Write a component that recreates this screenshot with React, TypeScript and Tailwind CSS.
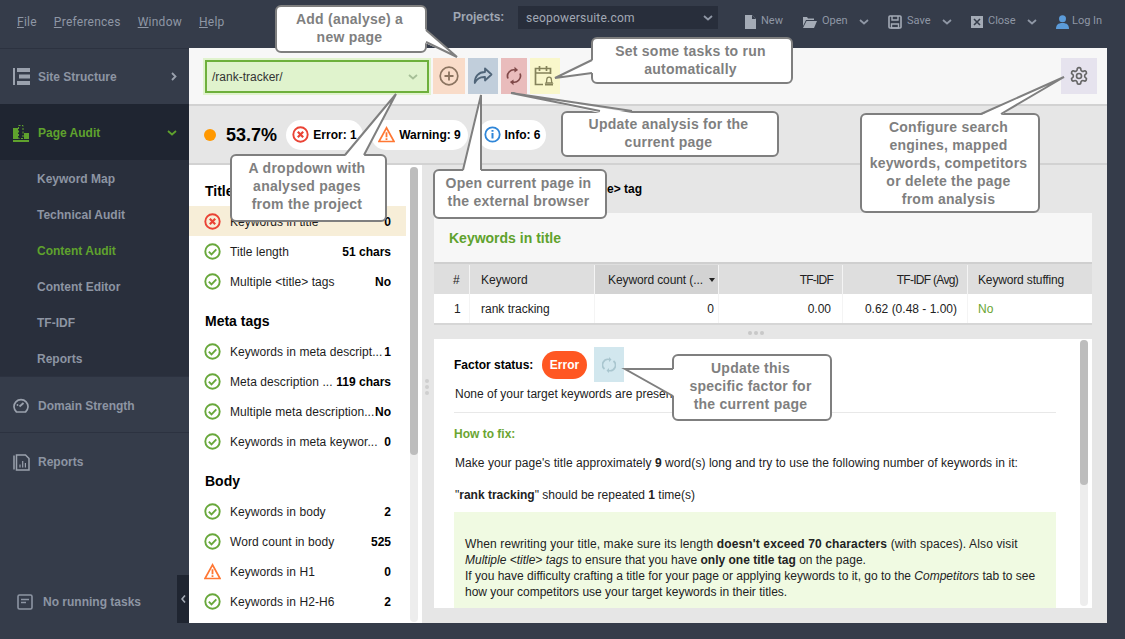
import React from "react";

const Check = () => (
  <svg width="17" height="17" viewBox="0 0 17 17" className="shrink-0" fill="none">
    <circle cx="8.500" cy="8.500" r="7.200" stroke="#69a83c" strokeWidth="1.900" />
    <path d="M4.800 8.600l2.700 2.700 4.800-5" stroke="#69a83c" strokeWidth="1.900" />
  </svg>
);
const ErrIcon = ({ s = 17 }: { s?: number }) => (
  <svg width={s} height={s} viewBox="0 0 17 17" className="shrink-0" fill="none">
    <circle cx="8.500" cy="8.500" r="7.200" stroke="#ea4335" strokeWidth="1.900" />
    <path d="M5.800 5.800l5.400 5.400M11.200 5.800l-5.400 5.400" stroke="#ea4335" strokeWidth="2.200" />
  </svg>
);
const Warn = ({ s = 17 }: { s?: number }) => (
  <svg width={s} height={s} viewBox="0 0 17 17" className="shrink-0" fill="none">
    <path d="M8.500 1.800L1 15.500h15z" stroke="#ff7733" strokeWidth="1.700" strokeLinejoin="miter" />
    <path d="M8.500 6.200v5M8.500 12.200v1.800" stroke="#ff7733" strokeWidth="1.800" />
  </svg>
);
const InfoIcon = () => (
  <svg width="17" height="17" viewBox="0 0 17 17" className="shrink-0" fill="none">
    <circle cx="8.500" cy="8.500" r="7.200" stroke="#2f86d8" strokeWidth="1.800" />
    <path d="M8.500 7v5.500M8.500 4v1.800" stroke="#2f86d8" strokeWidth="2" />
  </svg>
);
const Chev = ({ c = "#8f97a5", w = 10 }: { c?: string; w?: number }) => (
  <svg width={w} height="6" viewBox="0 0 10 6" fill="none" className="shrink-0">
    <path d="M1 1l4 3.500L9 1" stroke={c} strokeWidth="1.800" />
  </svg>
);

const MenuItem = ({ first, rest }: { first: string; rest: string }) => (
  <span>
    <span className="underline">{first}</span>
    {rest}
  </span>
);

const TopAction = ({ icon, label, chev, cls, gap = "ml-[5px]" }: { icon: React.ReactNode; label: string; chev?: boolean; cls: string; gap?: string }) => (
  <div className={`flex items-center ${cls}`}>
    {icon}
    <span className={gap}>{label}</span>
    {chev && <span className="ml-[11px]"><Chev /></span>}
  </div>
);

const SideMain = ({ icon, label, active, right, cls }: { icon: React.ReactNode; label: string; active?: boolean; right?: React.ReactNode; cls: string }) => (
  <div className={`flex items-center pl-[13px] pr-[12px] font-bold text-[12px] ${active ? "text-[#5fa22d]" : "text-[#8d95a3]"} ${cls}`}>
    <span className="w-[25px] shrink-0">{icon}</span>
    <span className="flex-1">{label}</span>
    {right}
  </div>
);

const Row = ({ status, label, value, hi }: { status: "ok" | "err" | "warn"; label: string; value: string; hi?: boolean }) => (
  <div className={`h-[30px] flex items-center pl-[15px] pr-[15px] text-[12px] text-[#1c1c1c] ${hi ? "bg-[#f7eed8]" : ""}`}>
    {status === "ok" ? <Check /> : status === "err" ? <ErrIcon /> : <Warn />}
    <span className="ml-[9px] pt-[2px] flex-1 whitespace-nowrap tracking-[0.06px]">{label}</span>
    <span className="pt-[2px] font-bold text-black whitespace-nowrap">{value}</span>
  </div>
);

const SecHead = ({ t, cls }: { t: string; cls?: string }) => (
  <div className={`h-[30px] flex items-center pl-[16px] text-[14px] font-bold text-black ${cls ?? ""}`}>{t}</div>
);

const Pill = ({ icon, text, cls }: { icon: React.ReactNode; text: string; cls: string }) => (
  <div className={`h-[30px] rounded-[15px] bg-white flex items-center justify-center gap-[4px] text-[12px] font-bold text-black ${cls}`}>
    {icon}
    <span className="pt-[1px]">{text}</span>
  </div>
);

const ToolBtn = ({ cls, children }: { cls: string; children: React.ReactNode }) => (
  <div className={`h-[36px] flex items-center justify-center shrink-0 ${cls}`}>{children}</div>
);

const Th = ({ cls, children }: { cls: string; children: React.ReactNode }) => (
  <div className={`h-full flex items-center border-r border-[#f4f4f4] ${cls}`}>{children}</div>
);

const Callout = ({ cls, lines }: { cls: string; lines: string[] }) => (
  <div className={`absolute bg-white border-2 border-[#7f7f7f] rounded-[6px] flex flex-col items-center justify-center pr-[3px] text-[14px] leading-[18px] tracking-[0.25px] font-bold text-[#7f7f7f] ${cls}`}>
    {lines.map((l) => (
      <div key={l} className="whitespace-nowrap">{l}</div>
    ))}
  </div>
);

const tails: { fill: string; line: string }[] = [
  { fill: "425,29 457,57 425,43", line: "426,30 457,57 426,42" },
  { fill: "593,60 555,78 593,73", line: "592,60 555,78 592,73" },
  { fill: "600,113 511,93 632,113", line: "600,111 511,93 632,111" },
  { fill: "345,156 396,94 364,156", line: "345,155 396,94 364,155" },
  { fill: "463,171 481,95 481,171", line: "463,170 481,95 481,170" },
  { fill: "981,115 1064,77 1001,115", line: "981,114 1064,77 1001,114" },
  { fill: "674,369 625,369 674,396", line: "673,369 625,369 673,396" },
];

export default function App() {
  return (
    <div className="relative w-[1125px] h-[639px] overflow-hidden bg-[#353c4a] flex flex-col font-['Liberation_Sans',Arial,sans-serif]">
      {/* Top bar */}
      <header className="h-[48px] shrink-0 flex text-[12px] text-[#8f97a5] font-['Roboto',sans-serif]">
        <nav className="flex gap-[17px] pl-[17px] pt-[15px] w-[453px] shrink-0 leading-[14px] tracking-[0.25px]">
          <MenuItem first="F" rest="ile" />
          <MenuItem first="P" rest="references" />
          <MenuItem first="W" rest="indow" />
          <MenuItem first="H" rest="elp" />
        </nav>
        <div className="w-[65px] shrink-0 pt-[10px] leading-[14px] font-bold text-[#a0a7b3] font-['Liberation_Sans',sans-serif]">Projects:</div>
        <div className="h-[23px] w-[200px] mt-[6px] shrink-0 bg-[#282e3b] flex items-center justify-between pl-[8px] pr-[5px] tracking-[0.2px] text-[#a2a9b5]">
          <span>seopowersuite.com</span>
          <Chev />
        </div>
        <div className="flex items-center h-[43px] text-[11px] pl-[27px]">
          <TopAction
            cls="w-[58px]"
            label="New"
            icon={
              <svg width="11" height="14" viewBox="0 0 11 14"><path d="M0 0h7l4 4v10H0z" fill="#a4abb6" /><path d="M7 0l4 4H7z" fill="#353c4a" /></svg>
            }
          />
          <TopAction
            cls="w-[85px]"
            label="Open"
            chev
            icon={
              <svg width="14" height="12" viewBox="0 0 14 12"><path d="M0 1h4l1 1.500h6V4H3L0 10z" fill="#a4abb6" /><path d="M3.500 5H14l-3 7H0z" fill="#a4abb6" /></svg>
            }
          />
          <TopAction
            cls="w-[83px]"
            label="Save"
            chev
            icon={
              <svg width="14" height="14" viewBox="0 0 14 14" fill="none"><rect x="1" y="1" width="12" height="12" rx="1" stroke="#a4abb6" strokeWidth="1.600" /><path d="M4 1v4h6V1M3.500 9h7v4h-7z" stroke="#a4abb6" strokeWidth="1.400" /></svg>
            }
          />
          <TopAction
            cls="w-[85px]"
            label="Close"
            chev
            icon={
              <svg width="12" height="12" viewBox="0 0 12 12"><rect width="12" height="12" fill="#a4abb6" /><path d="M3 3l6 6M9 3l-6 6" stroke="#353c4a" strokeWidth="1.600" /></svg>
            }
          />
          <TopAction
            cls=""
            gap="ml-[3px]"
            label="Log In"
            icon={
              <svg width="13" height="14" viewBox="0 0 13 14"><circle cx="6.500" cy="3.700" r="3.500" fill="#5b9bd9" /><path d="M0 14c0-4 2-6 6.500-6S13 10 13 14z" fill="#5b9bd9" /></svg>
            }
          />
        </div>
      </header>

      <div className="flex flex-1 min-h-0">
        {/* Sidebar */}
        <aside className="relative w-[189px] shrink-0 flex flex-col">
          <SideMain
            cls="h-[56px] border-t border-[#2c3240]"
            label="Site Structure"
            icon={
              <svg width="17" height="17" viewBox="0 0 17 17" fill="#9aa1ad"><rect x="0" y="0" width="2" height="17" /><rect x="4" y="0" width="13" height="4" /><rect x="6" y="6.500" width="11" height="4" /><rect x="4" y="13" width="13" height="4" /></svg>
            }
            right={
              <svg width="6" height="9" viewBox="0 0 6 9" fill="none"><path d="M1 1l3.500 3.500L1 8" stroke="#9aa1ad" strokeWidth="1.800" /></svg>
            }
          />
          <SideMain
            cls="h-[56px] pt-[2px] bg-[#1f2531]"
            active
            label="Page Audit"
            icon={
              <svg width="17" height="17" viewBox="0 0 17 17" fill="#5fa22d"><rect x="0" y="3" width="5" height="11" /><rect x="11" y="8" width="5" height="6" /><rect x="0" y="15" width="16" height="2" /><rect x="5.500" y="0.500" width="4.500" height="13" fill="none" stroke="#5fa22d" strokeDasharray="2 1.500" /></svg>
            }
            right={<Chev c="#5fa22d" />}
          />
          <div className="bg-[#292f3c] flex flex-col pl-[37px] text-[12px] font-bold text-[#8d95a3] h-[217px] border-b border-[#2c3240]">
            <div className="h-[36px] pt-[2px] flex items-center">Keyword Map</div>
            <div className="h-[36px] pt-[2px] flex items-center">Technical Audit</div>
            <div className="h-[36px] pt-[2px] flex items-center text-[#5fa22d]">Content Audit</div>
            <div className="h-[36px] pt-[2px] flex items-center">Content Editor</div>
            <div className="h-[36px] pt-[2px] flex items-center">TF-IDF</div>
            <div className="h-[36px] pt-[2px] flex items-center">Reports</div>
          </div>
          <SideMain
            cls="h-[56px] pt-[2px] border-b border-[#2c3240]"
            label="Domain Strength"
            icon={
              <svg width="16" height="16" viewBox="0 0 16 16" fill="none"><path d="M3.500 14A7 7 0 1 1 12.500 14z" stroke="#9aa1ad" strokeWidth="1.700" strokeLinejoin="round" /><path d="M6.500 8.500L10.500 5" stroke="#9aa1ad" strokeWidth="1.800" /><circle cx="4.500" cy="7" r="0.900" fill="#9aa1ad" /></svg>
            }
          />
          <SideMain
            cls="h-[56px] pt-[2px]"
            label="Reports"
            icon={
              <svg width="17" height="17" viewBox="0 0 17 17" fill="none"><path d="M1 1.500v14" stroke="#9aa1ad" strokeWidth="1.500" /><path d="M3.500 1h9l3.500 3.500V16H3.500z" stroke="#9aa1ad" strokeWidth="1.500" /><path d="M7 13.500v-3M9.700 13.500V7M12.400 13.500V9" stroke="#9aa1ad" strokeWidth="1.200" /></svg>
            }
          />
          <div className="mt-auto mb-[28px] flex items-center pl-[17px] text-[12px] font-bold text-[#8d95a3]">
            <svg width="16" height="16" viewBox="0 0 16 16" fill="none" className="mr-[10px]"><rect x="1" y="1" width="14" height="14" rx="1.500" stroke="#8d95a3" strokeWidth="1.600" /><path d="M4 5.500h8M4 8.500h5" stroke="#8d95a3" strokeWidth="1.600" /></svg>
            No running tasks
          </div>
          <div className="absolute right-0 bottom-[16px] w-[12px] h-[48px] bg-[#1f2531] flex items-center justify-center">
            <svg width="5" height="8" viewBox="0 0 5 8" fill="none"><path d="M4 .5L1 4l3 3.500" stroke="#a4abb6" strokeWidth="1.600" /></svg>
          </div>
        </aside>

        {/* Main */}
        <main className="w-[918px] h-[575px] shrink-0 bg-[#e6e6e6] flex flex-col">
          <div className="h-[58px] shrink-0 bg-[#f7f7f7] border-b-2 border-[#d2d2d2] flex pt-[10px] pl-[14px] pr-[10px]">
            <div className="w-[228px] h-[37px] bg-[#e0f3cd] p-[2px] shrink-0">
              <div className="w-full h-full border-2 border-[#6eb03c] flex items-center justify-between pl-[5px] pr-[9px] text-[12px] text-[#333]">
                <span>/rank-tracker/</span>
                <Chev c="#a6bf97" />
              </div>
            </div>
            <ToolBtn cls="w-[32px] ml-[2px] bg-[#f9dcc9]">
              <svg width="20" height="20" viewBox="0 0 20 20" fill="none"><circle cx="10" cy="10" r="8.800" stroke="#8b7460" strokeWidth="1.700" /><path d="M10 5.500v9M5.500 10h9" stroke="#8b7460" strokeWidth="1.800" /></svg>
            </ToolBtn>
            <ToolBtn cls="w-[30px] ml-[3px] bg-[#c1cedb]">
              <svg width="20" height="18" viewBox="0 0 20 18" fill="none"><path d="M12 1.500l6.500 6-6.500 6V10C7 9.800 3.800 11.500 1.800 16 1.500 9.500 5.500 5 12 5z" stroke="#4f6478" strokeWidth="1.800" strokeLinejoin="round" /></svg>
            </ToolBtn>
            <ToolBtn cls="w-[26px] ml-[3px] bg-[#e9bcbc]">
              <svg width="16" height="20" viewBox="0 0 16 20" fill="none"><path d="M2 12.500A6.300 6.300 0 0 1 10 4.200M14 7.500A6.300 6.300 0 0 1 6 15.800" stroke="#7f4848" strokeWidth="1.700" /><path d="M8.500 0.800l3.600 3.200-3.600 2.600zM7.500 13.400l-3.600 2.600 3.600 3.200z" fill="#7f4848" /></svg>
            </ToolBtn>
            <ToolBtn cls="w-[30px] ml-[3px] bg-[#f9f7cb]">
              <svg width="22" height="22" viewBox="0 0 22 22" fill="none"><path d="M9 19.500H1.500V3.500h15V9M1.500 8h15M5.500 1v5M12.500 1v5" stroke="#85835a" strokeWidth="1.700" /><path d="M12 18c.8-1 .8-2 .8-3.500a2.300 2.300 0 0 1 4.600 0c0 1.500 0 2.500.8 3.500z" stroke="#85835a" strokeWidth="1.300" /><rect x="11" y="19" width="8" height="1.500" fill="#85835a" /></svg>
            </ToolBtn>
            <ToolBtn cls="w-[36px] ml-auto bg-[#e6e3ee]">
              <svg width="20" height="20" viewBox="0 0 24 24" fill="none" stroke="#666" strokeWidth="2"><circle cx="12" cy="12" r="3" /><path d="M12.200 2h-.4a2 2 0 0 0-2 2v.2a2 2 0 0 1-1 1.700l-.4.300a2 2 0 0 1-2 0l-.2-.1a2 2 0 0 0-2.700.700l-.2.400a2 2 0 0 0 .7 2.700l.2.100a2 2 0 0 1 1 1.700v.5a2 2 0 0 1-1 1.700l-.2.100a2 2 0 0 0-.7 2.700l.2.400a2 2 0 0 0 2.700.7l.2-.1a2 2 0 0 1 2 0l.4.300a2 2 0 0 1 1 1.700v.2a2 2 0 0 0 2 2h.4a2 2 0 0 0 2-2v-.2a2 2 0 0 1 1-1.700l.4-.3a2 2 0 0 1 2 0l.2.100a2 2 0 0 0 2.700-.7l.2-.4a2 2 0 0 0-.7-2.700l-.2-.1a2 2 0 0 1-1-1.700v-.5a2 2 0 0 1 1-1.700l.2-.1a2 2 0 0 0 .7-2.700l-.2-.4a2 2 0 0 0-2.700-.7l-.2.100a2 2 0 0 1-2 0l-.4-.3a2 2 0 0 1-1-1.700V4a2 2 0 0 0-2-2z" /></svg>
            </ToolBtn>
          </div>

          <div className="h-[59px] shrink-0 border-b-2 border-[#d2d2d2] flex items-center pl-[15px]">
            <span className="w-[12px] h-[12px] rounded-full bg-[#ff9800] shrink-0" />
            <span className="ml-[10px] w-[60px] pt-[2px] text-[18px] font-bold text-black">53.7%</span>
            <Pill cls="w-[77px]" icon={<ErrIcon />} text="Error: 1" />
            <Pill cls="w-[97px] ml-[8px]" icon={<Warn />} text="Warning: 9" />
            <Pill cls="w-[68px] ml-[10px]" icon={<InfoIcon />} text="Info: 6" />
          </div>

          <div className="flex flex-1 min-h-0">
            {/* Factors list */}
            <div className="w-[233px] shrink-0 bg-white flex overflow-hidden">
              <div className="w-[217px] shrink-0 pt-[11px]">
                <SecHead t="Title" />
                <Row status="err" label="Keywords in title" value="0" hi />
                <Row status="ok" label="Title length" value="51 chars" />
                <Row status="ok" label="Multiple <title> tags" value="No" />
                <SecHead t="Meta tags" cls="mt-[10px]" />
                <Row status="ok" label="Keywords in meta descript..." value="1" />
                <Row status="ok" label="Meta description ..." value="119 chars" />
                <Row status="ok" label="Multiple meta description..." value="No" />
                <Row status="ok" label="Keywords in meta keywor..." value="0" />
                <SecHead t="Body" cls="mt-[10px]" />
                <Row status="ok" label="Keywords in body" value="2" />
                <Row status="ok" label="Word count in body" value="525" />
                <Row status="warn" label="Keywords in H1" value="0" />
                <Row status="ok" label="Keywords in H2-H6" value="2" />
              </div>
              <div className="ml-[4px] mt-[2px] mb-[1px] w-[8px] rounded-[4px] bg-[#ededed] flex flex-col">
                <div className="h-[288px] rounded-[4px] bg-[#bdbdbd]" />
              </div>
            </div>

            {/* Right pane */}
            <div className="relative flex-1 min-w-0 pl-[12px] pr-[15px] pb-[15px] flex flex-col">
              <div className="absolute left-[3px] top-[214px] flex flex-col gap-[2px]">
                <span className="w-[4px] h-[4px] rounded-full bg-[#cfcfcf]" />
                <span className="w-[4px] h-[4px] rounded-full bg-[#cfcfcf]" />
                <span className="w-[4px] h-[4px] rounded-full bg-[#cfcfcf]" />
              </div>
              <div className="h-[48px] shrink-0 flex items-center pb-[1px] justify-end pr-[450px] text-[12px] font-bold text-black whitespace-nowrap">{"Keywords in the page's <title> tag"}</div>
              <div className="h-[51px] shrink-0 bg-[#f7f7f7] border-b-2 border-[#cfcfcf] flex items-center pl-[15px] pt-[2px] text-[14px] font-bold text-[#5fa22d]">Keywords in title</div>
              <div className="h-[30px] shrink-0 bg-[#dedede] flex text-[12px] text-[#222] pt-[1px]">
                <Th cls="w-[36px] pl-[19px]">#</Th>
                <Th cls="w-[125px] pl-[11px]">Keyword</Th>
                <Th cls="w-[124px] pl-[13px] gap-[6px] bg-[#d3d3d3] tracking-[-0.1px]">
                  <span>Keyword count (...</span>
                  <svg width="6" height="4" viewBox="0 0 6 4"><path d="M0 0h6L3 4z" fill="#222" /></svg>
                </Th>
                <Th cls="w-[124px] justify-end pr-[9px] tracking-[-0.8px]">TF-IDF</Th>
                <Th cls="w-[125px] justify-end pr-[9px] tracking-[-0.7px]">TF-IDF (Avg)</Th>
                <div className="flex-1 flex items-center pl-[10px] tracking-[-0.15px]">Keyword stuffing</div>
              </div>
              <div className="h-[31px] shrink-0 bg-white border-b-2 border-[#d6d6d6] flex text-[12px] text-[#222]">
                <Th cls="w-[36px] pl-[20px]">1</Th>
                <Th cls="w-[125px] pl-[11px]">rank tracking</Th>
                <Th cls="w-[124px] justify-end pr-[4px]">0</Th>
                <Th cls="w-[124px] justify-end pr-[11px]">0.00</Th>
                <Th cls="w-[125px] justify-end pr-[10px]">0.62 (0.48 - 1.00)</Th>
                <div className="flex-1 flex items-center pl-[10px] text-[#6aa532]">No</div>
              </div>
              <div className="h-[14px] shrink-0 flex items-center justify-center gap-[2px] pr-[14px] pt-[2px]">
                <span className="w-[4px] h-[4px] rounded-full bg-[#c8c8c8]" />
                <span className="w-[4px] h-[4px] rounded-full bg-[#c8c8c8]" />
                <span className="w-[4px] h-[4px] rounded-full bg-[#c8c8c8]" />
              </div>
              <div className="flex-1 min-h-0 bg-white flex overflow-hidden">
                <div className="w-[622px] shrink-0 pl-[20px] text-[12px] text-[#222]">
                  <div className="h-[50px] flex items-center pt-[1px]">
                    <span className="font-bold text-black w-[88px]">Factor status:</span>
                    <span className="w-[45px] h-[28px] rounded-[14px] bg-[#ff5722] text-white font-bold flex items-center justify-center">Error</span>
                    <span className="ml-[7px] w-[30px] h-[35px] bg-[#d2e7ee] flex items-center justify-center">
                      <svg width="14" height="16" viewBox="0 0 14 16" fill="none"><path d="M2.500 12A5.500 5.500 0 0 1 7.500 2.500M11.500 4A5.500 5.500 0 0 1 6.500 13.500" stroke="#a9c6cf" strokeWidth="1.700" /><path d="M7 0l2.500 2.500L7 5zM7 11l-2.500 2.500L7 16z" fill="#a9c6cf" /></svg>
                    </span>
                  </div>
                  <div className="-mt-[6px] h-[30px] pl-[1px] pb-[7px] flex items-center whitespace-nowrap border-b border-[#e8e8e8]">None of your target keywords are present in the title tag.</div>
                  <div className="mt-[13px] font-bold text-[#6aa532] leading-[16px]">How to fix:</div>
                  <div className="mt-[13px] leading-[16px] pl-[1px] tracking-[0.06px]">
                    {"Make your page's title approximately "}<b>9</b>{" word(s) long and try to use the following number of keywords in it:"}
                  </div>
                  <div className="mt-[16px] leading-[16px] pl-[1px]">
                    {'"'}<b>rank tracking</b>{'" should be repeated '}<b>1</b> time(s)
                  </div>
                  <div className="mt-[9px] h-[110px] bg-[#f0fae2] pt-[24px] pl-[11px] leading-[16px]">
                    <span className="tracking-[0.12px]">When rewriting your title, make sure its length <b>{"doesn't exceed 70 characters"}</b> (with spaces). Also visit</span>
                    <br />
                    <i>{"Multiple <title> tags"}</i> to ensure that you have <b>only one title tag</b> on the page.
                    <br />
                    If you have difficulty crafting a title for your page or applying keywords to it, go to the <i>Competitors</i> tab to see
                    <br />
                    how your competitors use your target keywords in their titles.
                  </div>
                </div>
                <div className="ml-[24px] mt-[1px] mb-[2px] w-[8px] rounded-[4px] bg-[#ededed]">
                  <div className="h-[145px] rounded-[4px] bg-[#bdbdbd]" />
                </div>
              </div>
            </div>
          </div>
        </main>
      </div>

      {/* Callouts */}
      <Callout cls="left-[275px] top-[5px] w-[152px] h-[48px] pb-[2px]" lines={["Add (analyse) a", "new page"]} />
      <Callout cls="left-[591px] top-[37px] w-[202px] h-[47px] pb-[2px]" lines={["Set some tasks to run", "automatically"]} />
      <Callout cls="left-[561px] top-[111px] w-[218px] h-[46px] pb-[2px]" lines={["Update analysis for the", "current page"]} />
      <Callout cls="left-[230px] top-[154px] w-[157px] h-[68px] pb-[4px]" lines={["A dropdown with", "analysed pages", "from the project"]} />
      <Callout cls="left-[433px] top-[169px] w-[174px] h-[50px] pb-[4px]" lines={["Open current page in", "the external browser"]} />
      <Callout cls="left-[860px] top-[113px] w-[180px] h-[100px]" lines={["Configure search", "engines, mapped", "keywords, competitors", "or delete the page", "from analysis"]} />
      <Callout cls="left-[672px] top-[354px] w-[160px] h-[67px] pb-[4px]" lines={["Update this", "specific factor for", "the current page"]} />
      <svg className="absolute left-0 top-0 pointer-events-none" width="1125" height="639" fill="none">
        {tails.map((t) => (
          <g key={t.line}>
            <polygon points={t.fill} fill="#ffffff" />
            <polyline points={t.line} stroke="#7f7f7f" strokeWidth="2" />
          </g>
        ))}
      </svg>
    </div>
  );
}
